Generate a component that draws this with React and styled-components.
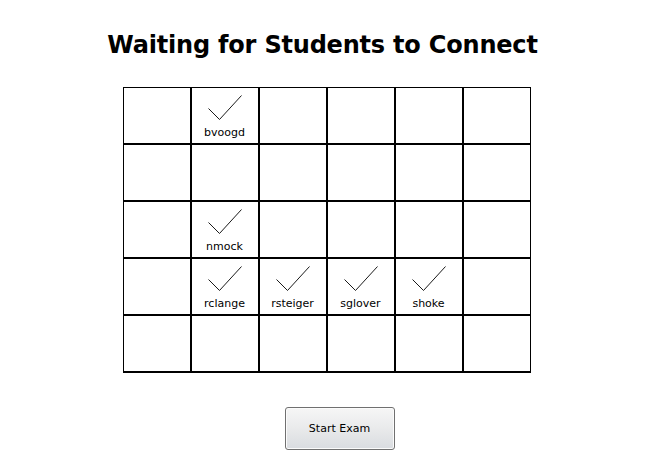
import React from "react"
import styled, {createGlobalStyle} from "styled-components";

const Global = createGlobalStyle`
	html, body {
		margin: 0;
		padding: 0;
		background: #fff;
	}
`

const cells = [
	["", "bvoogd", "", "", "", ""],
	["", "", "", "", "", ""],
	["", "nmock", "", "", "", ""],
	["", "rclange", "rsteiger", "sglover", "shoke", ""],
	["", "", "", "", "", ""],
];

const Check = () => (
	<svg width="34" height="26" viewBox="0 0 34 26">
		<polyline points="0.5,13.5 11.5,24.5 33.5,0.5" fill="none" stroke="#1a1a1a" strokeWidth="1" />
	</svg>
);

const App = () => {
	return(
		<Page>
			<Global />
			<Title>Waiting for Students to Connect</Title>
			<Grid>
				{cells.flat().map((name, i) => (
					<Cell key={i}>
						{name && (
							<>
								<Check />
								<Name>{name}</Name>
							</>
						)}
					</Cell>
				))}
			</Grid>
			<Btn type="button">Start Exam</Btn>
		</Page>
	);
}

const Page = styled.div`
	width: 647px;
	height: 471px;
	display: flex;
	flex-direction: column;
	align-items: center;
	padding-top: 29px;
	box-sizing: border-box;
	font-family: "DejaVu Sans", Verdana, sans-serif;
`
const Title = styled.h1`
	margin: 0 0 0 -2px;
	font-family: "DejaVu Sans", Verdana, sans-serif;
	font-weight: bold;
	font-size: 24px;
	line-height: 32px;
	letter-spacing: -0.2px;
	color: #000;
`
const Grid = styled.div`
	margin-top: 26px;
	margin-left: 6px;
	display: grid;
	grid-template-columns: repeat(6, 66px);
	grid-template-rows: repeat(5, 55px);
	gap: 2px;
	padding: 1px 1px 2px 1px;
	background: #000;
`
const Cell = styled.div`
	background: #fff;
	display: flex;
	flex-direction: column;
	align-items: center;
	padding-top: 7px;
	box-sizing: border-box;
`
const Name = styled.div`
	margin-top: 5px;
	font-size: 11px;
	line-height: 13px;
	color: #000;
`
const Btn = styled.button`
	margin-top: 34px;
	margin-left: 32px;
	width: 110px;
	height: 43px;
	border: 1px solid #707070;
	border-radius: 3px;
	box-shadow: inset 0 0 0 1px #fbfbfb;
	background: linear-gradient(#f6f6f6, #e9eaeb 50%, #d9dce0);
	font-family: "DejaVu Sans", Verdana, sans-serif;
	font-size: 11px;
	color: #000;
	padding: 0;
`

export default App;
